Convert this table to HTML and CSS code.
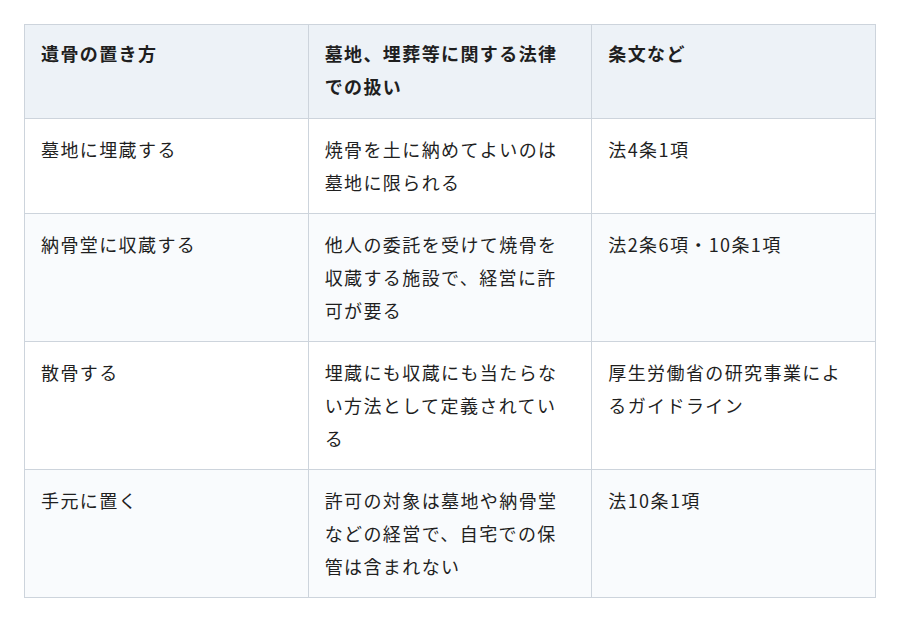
FILE: index.html
```html
<!DOCTYPE html>
<html lang="ja">
<head>
<meta charset="utf-8">
<link rel="stylesheet" href="styles.css">
</head>
<body>
<table class="law-table">
  <thead>
    <tr>
      <th>遺骨の置き方</th>
      <th>墓地、埋葬等に関する法律での扱い</th>
      <th>条文など</th>
    </tr>
  </thead>
  <tbody>
    <tr>
      <td>墓地に埋蔵する</td>
      <td>焼骨を土に納めてよいのは墓地に限られる</td>
      <td>法4条1項</td>
    </tr>
    <tr>
      <td>納骨堂に収蔵する</td>
      <td>他人の委託を受けて焼骨を収蔵する施設で、経営に許可が要る</td>
      <td>法2条6項・10条1項</td>
    </tr>
    <tr>
      <td>散骨する</td>
      <td>埋蔵にも収蔵にも当たらない方法として定義されている</td>
      <td>厚生労働省の研究事業によるガイドライン</td>
    </tr>
    <tr>
      <td>手元に置く</td>
      <td>許可の対象は墓地や納骨堂などの経営で、自宅での保管は含まれない</td>
      <td>法10条1項</td>
    </tr>
  </tbody>
</table>
</body>
</html>
```

FILE: styles.css
```css
html, body {
  margin: 0;
  padding: 0;
  background: #ffffff;
}
body {
  padding: 24px;
  font-family: "Noto Sans CJK JP", "Noto Sans", sans-serif;
  color: #1f1f1f;
}
.law-table {
  width: 852px;
  border-collapse: collapse;
  table-layout: fixed;
  font-size: 18px;
  letter-spacing: 1.4px;
  line-height: 33px;
}
.law-table th,
.law-table td {
  border: 1px solid #cdd4dc;
  padding: 14px 16px;
  text-align: left;
  vertical-align: top;
}
.law-table th {
  padding: 12px 16px 15px;
  background: #edf2f7;
  font-weight: 700;
}
.law-table tbody tr:nth-child(even) td {
  background: #f9fbfd;
}
```
